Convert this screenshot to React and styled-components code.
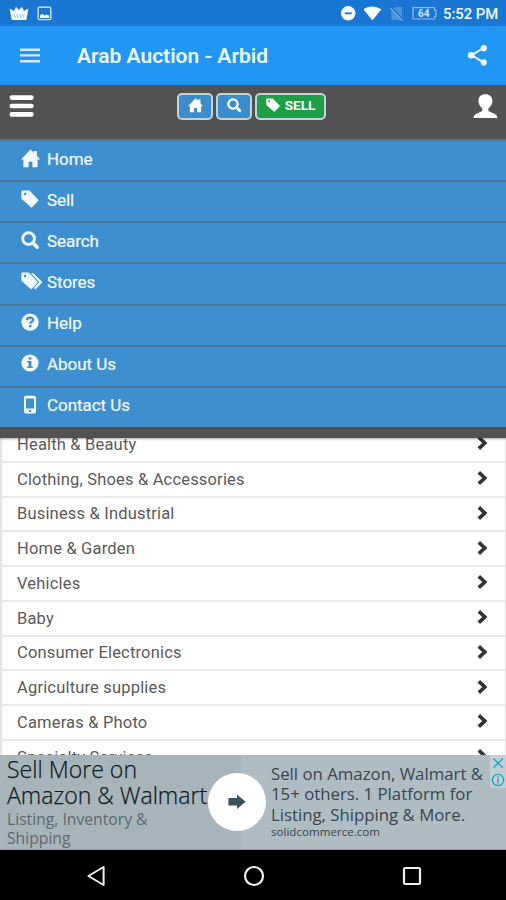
import React from 'react'
import styled, { createGlobalStyle } from 'styled-components'

const GlobalStyle = createGlobalStyle`
  * {
    box-sizing: border-box;
  }
  body {
    margin: 0;
    background: #fff;
    font-family: Roboto, sans-serif;
  }
`

const Screen = styled.div`
  width: 506px;
  height: 900px;
  display: flex;
  flex-direction: column;
  overflow: hidden;
  background: #fff;
`

const Svg = styled.svg`
  display: block;
  flex: none;
`

const StatusBar = styled.div`
  flex: none;
  height: 26px;
  padding: 0 8px 0 9px;
  display: flex;
  align-items: center;
  justify-content: space-between;
  background: #1976d2;
  color: #f4faff;
`

const StatusGroup = styled.div`
  display: flex;
  align-items: center;
  gap: ${({ $gap }) => $gap}px;
`

const Clock = styled.span`
  width: 55px;
  margin-left: -2px;
  font-size: 14.8px;
  line-height: 26px;
  font-weight: 500;
  white-space: nowrap;
  padding-top: 2px;
`

const AppBar = styled.header`
  flex: none;
  height: 59px;
  padding: 0 17px 0 20px;
  display: flex;
  align-items: center;
  background: #2196f3;
  color: #edf8ff;
`

const Title = styled.h1`
  flex: 1;
  margin: 0 0 0 37px;
  font-size: 21px;
  font-weight: 600;
  line-height: 30px;
  white-space: nowrap;
  padding-top: 1px;
`

const Header = styled.div`
  flex: none;
  padding-bottom: 11px;
  background: #525252;
  box-shadow: 0 1px 2px rgba(0, 0, 0, 0.35);
  z-index: 1;
`

const Toolbar = styled.div`
  height: 54px;
  padding: 8px 8px 0 9px;
  display: flex;
  justify-content: space-between;
  align-items: flex-start;
  color: #fff;
`

const ButtonGroup = styled.div`
  display: flex;
  gap: 3px;
  margin-right: 4px;
`

const Button = styled.button`
  width: ${({ $width }) => $width}px;
  height: 27px;
  padding: 0 0 3px;
  display: flex;
  align-items: center;
  justify-content: center;
  gap: 4px;
  border: 2px solid #bfd3df;
  border-radius: 5px;
  background: ${({ $green }) => ($green ? '#1f9e48' : '#3a8ccb')};
  color: #fff;
  font-family: Roboto, sans-serif;
  font-size: 13.5px;
  font-weight: 700;
`

const MenuItem = styled.a`
  height: 41.15px;
  padding: 0 0 4px 21px;
  display: flex;
  align-items: center;
  gap: 4px;
  border-top: 2px solid #4a7498;
  background: #3e8fd0;
  color: #f2f9ff;
  font-size: 17px;
  letter-spacing: -0.05px;
  -webkit-text-stroke: 0.2px #f2f9ff;
`

const MenuIcon = styled.span`
  width: 22px;
  margin-top: -1px;
`

const List = styled.ul`
  flex: 1;
  min-height: 0;
  margin: 0;
  padding: 0;
  overflow: hidden;
  list-style: none;
  border-left: 2px solid #e4e4e4;
  border-right: 1px solid #e4e4e4;
`

const Row = styled.li`
  height: 34.78px;
  padding: 0 17px 0 15px;
  display: flex;
  align-items: center;
  justify-content: space-between;
  border-bottom: 2px solid #e9e9e9;
  color: #5a5a5a;
  font-size: 16.5px;
  letter-spacing: 0.18px;

  &:first-child {
    margin-top: -10px;
  }
`

const Ad = styled.section`
  position: relative;
  flex: none;
  height: 95px;
  display: flex;
  border-bottom: 1px solid #8e9ba1;
  font-family: 'Open Sans', sans-serif;
`

const AdLeft = styled.div`
  width: 241px;
  padding: 1px 0 0 7px;
  background: #a6b4bc;
  white-space: nowrap;
`

const AdHeadline = styled.div`
  margin-bottom: 2px;
  color: #101c22;
  font-size: 23.1px;
  font-weight: 300;
  line-height: 26px;
  -webkit-text-stroke: 0.25px #101c22;
`

const AdSub = styled.div`
  color: #5c696f;
  font-size: 15.7px;
  line-height: 19px;
`

const AdRight = styled.div`
  flex: 1;
  padding: 9px 0 0 30px;
  background: #aebcc3;
  color: #37474f;
  font-size: 16.8px;
  line-height: 20.3px;
  white-space: nowrap;
`

const AdLink = styled.div`
  font-size: 11.6px;
  line-height: 14px;
`

const AdArrow = styled.div`
  position: absolute;
  left: 208px;
  top: 18px;
  width: 58px;
  height: 58px;
  display: flex;
  align-items: center;
  justify-content: center;
  border-radius: 50%;
  background: #fff;
`

const AdChoices = styled.div`
  position: absolute;
  right: 0;
  top: 0;
  width: 16px;
  height: 33px;
  background: #c3cdd2;
`

const NavBar = styled.nav`
  flex: none;
  height: 50px;
  background: #000;
  display: flex;
  align-items: center;
  justify-content: center;
  gap: 137px;
  padding: 1px 0 0 2px;
`

const HomeIcon = ({ size = 19 }) => (
  <Svg width={size} height={size} viewBox='0 0 19 19' fill='currentColor'>
    <path d='M9.5 0.4 12.8 3.6V2H15.8V6.6L19 10.4H16.6V18.2H11.4V12.8H7.6V18.2H2.4V10.4H0Z' />
  </Svg>
)

const TagIcon = ({ size = 19 }) => (
  <Svg width={size} height={size} viewBox='0 0 19 19' fill='currentColor'>
    <path
      fillRule='evenodd'
      d='M1.2 0.6H8.4L17.8 10.2 10.6 17.8 0.4 8.8V1.4ZM4 2.8a1.3 1.3 0 1 0 0 2.6 1.3 1.3 0 0 0 0-2.6Z'
    />
  </Svg>
)

const TagsIcon = () => (
  <Svg width='22' height='19' viewBox='0 0 22 19' fill='currentColor'>
    <path
      fillRule='evenodd'
      d='M1.2 0.6H7.8L17 10.2 10.2 17.6 0.4 8.8V1.4ZM4 2.8a1.3 1.3 0 1 0 0 2.6 1.3 1.3 0 0 0 0-2.6Z'
    />
    <path d='M10 1.2H12.4L21.4 10.2 14.4 17.4 12.8 16 18.4 10.2Z' />
  </Svg>
)

const SearchIcon = ({ size = 19 }) => (
  <Svg width={size} height={size} viewBox='0 0 19 19' fill='none' stroke='currentColor'>
    <circle cx='7.6' cy='7.6' r='5.9' strokeWidth='2.9' />
    <path d='M11.8 11.8 16.2 16.2' strokeWidth='3.6' strokeLinecap='round' />
  </Svg>
)

const HelpIcon = () => (
  <Svg width='19' height='19' viewBox='0 0 19 19' fill='none'>
    <circle cx='9' cy='9.2' r='8.6' fill='currentColor' />
    <path d='M6 7.3C6 5.4 7.2 4.6 9 4.6S12.2 5.5 12.2 7C12.2 8.7 9.2 8.8 9.2 10.8' stroke='#3e8fd0' strokeWidth='2.2' />
    <path d='M8 12H10.4V14.3H8Z' fill='#3e8fd0' />
  </Svg>
)

const InfoIcon = () => (
  <Svg width='19' height='19' viewBox='0 0 19 19'>
    <circle cx='9' cy='9' r='8.6' fill='currentColor' />
    <path d='M7.6 3.2H10.4V5.6H7.6ZM6.2 7H10.4V12.4H11.8V14H6.2V12.4H7.6V8.6H6.2Z' fill='#3e8fd0' />
  </Svg>
)

const PhoneIcon = () => (
  <Svg width='19' height='19' viewBox='0 0 19 19' fill='currentColor'>
    <path
      fillRule='evenodd'
      d='M5 0.8H13A2 2 0 0 1 15 2.8V16.5A2 2 0 0 1 13 18.5H5A2 2 0 0 1 3 16.5V2.8A2 2 0 0 1 5 .8ZM5 3.4V13.6H13V3.4ZM9 14.7a1.2 1.2 0 1 0 0 2.4 1.2 1.2 0 0 0 0-2.4Z'
    />
  </Svg>
)

const Chevron = () => (
  <Svg width='12' height='16' viewBox='0 0 12 16' fill='none' stroke='#333' strokeWidth='3.6'>
    <path d='M2.8 1.4 8.8 7 2.8 12.6' />
  </Svg>
)

const menu = [
  { label: 'Home', icon: <HomeIcon /> },
  { label: 'Sell', icon: <TagIcon /> },
  { label: 'Search', icon: <SearchIcon /> },
  { label: 'Stores', icon: <TagsIcon /> },
  { label: 'Help', icon: <HelpIcon /> },
  { label: 'About Us', icon: <InfoIcon /> },
  { label: 'Contact Us', icon: <PhoneIcon /> }
]

const categories = [
  'Health & Beauty',
  'Clothing, Shoes & Accessories',
  'Business & Industrial',
  'Home & Garden',
  'Vehicles',
  'Baby',
  'Consumer Electronics',
  'Agriculture supplies',
  'Cameras & Photo',
  'Specialty Services'
]

const Status = () => (
  <StatusBar>
    <StatusGroup $gap={8}>
      <Svg width='20' height='15' viewBox='0 0 20 15' fill='currentColor'>
        <path d='M0.6 2.4 5 5 7 0.8 9.8 4 13 0.8 15 5 19.4 2.4 17.4 14H2.8Z' />
        <path d='M4.4 9H15.6M5 11H15' stroke='#6ba8e2' strokeWidth='0.8' strokeDasharray='2 1' />
      </Svg>
      <Svg width='15' height='15' viewBox='0 0 15 15' fill='none'>
        <rect x='1.2' y='1.2' width='12.6' height='12.4' rx='1' stroke='#c5dff7' strokeWidth='1.4' />
        <path d='M3 12V9.2L5.4 7.8 7.4 9.6 9.6 8.4 12.2 9.6V12Z' fill='currentColor' />
      </Svg>
    </StatusGroup>
    <StatusGroup $gap={8}>
      <Svg width='15' height='16' viewBox='0 0 15 16'>
        <circle cx='7.2' cy='8.3' r='7.2' fill='currentColor' />
        <path d='M3.8 8.3H10.8' stroke='#1976d2' strokeWidth='1.8' />
      </Svg>
      <Svg width='18' height='15' viewBox='0 0 18 15' fill='currentColor'>
        <path d='M-0.6 3.2Q8.4-2.4 17.4 3.2L8.4 14.6Z' />
      </Svg>
      <Svg width='14' height='15' viewBox='0 0 14 15'>
        <path d='M5.2 1H12V14H1.4V4.4Z' fill='#4f92d5' />
        <path d='M1 1 13.4 14.6' stroke='#1976d2' strokeWidth='2.2' />
        <path d='M0.4 1.8 12.4 14.6' stroke='#7fb2e3' strokeWidth='1.2' />
      </Svg>
      <Svg width='25' height='14' viewBox='0 0 25 14' fill='none'>
        <path d='M1 1.6H22.6V4.4H24V10.4H22.6V13H1Z' stroke='#8fbdea' strokeWidth='1.2' />
        <text x='6' y='11' fontSize='10' fontWeight='700' fill='#cfe4f8'>
          64
        </text>
      </Svg>
      <Clock>5:52 PM</Clock>
    </StatusGroup>
  </StatusBar>
)

const App = () => (
  <>
    <GlobalStyle />
    <Screen>
      <Status />
      <AppBar>
        <Svg width='20' height='16' viewBox='0 0 20 16' stroke='#d4ebfd' strokeWidth='2.4'>
          <path d='M0 1.8H20M0 7.4H20M0 13.2H20' />
        </Svg>
        <Title>Arab Auction - Arbid</Title>
        <Svg width='22' height='23' viewBox='0 0 22 23' fill='currentColor'>
          <path d='M16.5 4 4.6 11.2 16.5 18.4' fill='none' stroke='currentColor' strokeWidth='2' />
          <circle cx='16.8' cy='4.2' r='3.1' />
          <circle cx='4.2' cy='11.3' r='3.3' />
          <circle cx='16.8' cy='18.4' r='3.1' />
        </Svg>
      </AppBar>
      <Header>
        <Toolbar>
          <Svg width='25' height='26' viewBox='0 0 25 26' stroke='#fff' strokeWidth='4.6' strokeLinecap='round'>
            <path d='M2.8 4.6H22.4M2.8 13H22.4M2.8 21.4H22.4' />
          </Svg>
          <ButtonGroup>
            <Button $width={36}>
              <HomeIcon size={15} />
            </Button>
            <Button $width={36}>
              <SearchIcon size={15} />
            </Button>
            <Button $width={71} $green>
              <TagIcon size={15} />
              SELL
            </Button>
          </ButtonGroup>
          <Svg width='25' height='26' viewBox='0 0 25 26' fill='#fff'>
            <path d='M12.3 1.2C16.6 1.2 19.4 3.6 19.4 7.8 19.4 11.2 17.4 13.6 15.4 15.6V18L22.3 21.2Q24.2 22.2 24.4 25H0.4Q0.6 22.2 2.4 21.2L9.2 18V15.6C7.2 13.6 5.4 11.2 5.4 7.8 5.4 3.6 8.2 1.2 12.3 1.2Z' />
          </Svg>
        </Toolbar>
        {menu.map(({ label, icon }) => (
          <MenuItem key={label}>
            <MenuIcon>{icon}</MenuIcon>
            {label}
          </MenuItem>
        ))}
      </Header>
      <List>
        {categories.map(name => (
          <Row key={name}>
            <span>{name}</span>
            <Chevron />
          </Row>
        ))}
      </List>
      <Ad>
        <AdLeft>
          <AdHeadline>
            Sell More on
            <br />
            Amazon &amp; Walmart
          </AdHeadline>
          <AdSub>
            Listing, Inventory &amp;
            <br />
            Shipping
          </AdSub>
        </AdLeft>
        <AdRight>
          Sell on Amazon, Walmart &amp;
          <br />
          15+ others. 1 Platform for
          <br />
          Listing, Shipping &amp; More.
          <AdLink>solidcommerce.com</AdLink>
        </AdRight>
        <AdArrow>
          <Svg width='18' height='16' viewBox='0 0 18 16' fill='#37535c'>
            <path d='M0.4 4H9V0.6L17.6 7.8 9 15V11.6H0.4Z' />
          </Svg>
        </AdArrow>
        <AdChoices>
          <Svg width='16' height='33' viewBox='0 0 16 33' fill='none' stroke='#19a8c6' strokeWidth='1.4'>
            <path d='M3.4 3.4 12.8 12.8M12.8 3.4 3.4 12.8' />
            <circle cx='8' cy='25' r='5.6' />
            <path d='M8 23.6V28.4M8 21.2V22.6' />
          </Svg>
        </AdChoices>
      </Ad>
      <NavBar>
        <Svg width='20' height='22' viewBox='0 0 20 22' fill='none' stroke='#eee' strokeWidth='2'>
          <path d='M17.6 2V20L2.4 11Z' strokeLinejoin='round' />
        </Svg>
        <Svg width='22' height='22' viewBox='0 0 22 22' fill='none' stroke='#eee' strokeWidth='2.2'>
          <circle cx='11' cy='11' r='9' />
        </Svg>
        <Svg width='20' height='20' viewBox='0 0 20 20' fill='none' stroke='#eee' strokeWidth='2.2'>
          <rect x='2' y='2' width='16' height='16' rx='1' />
        </Svg>
      </NavBar>
    </Screen>
  </>
)

export default App
